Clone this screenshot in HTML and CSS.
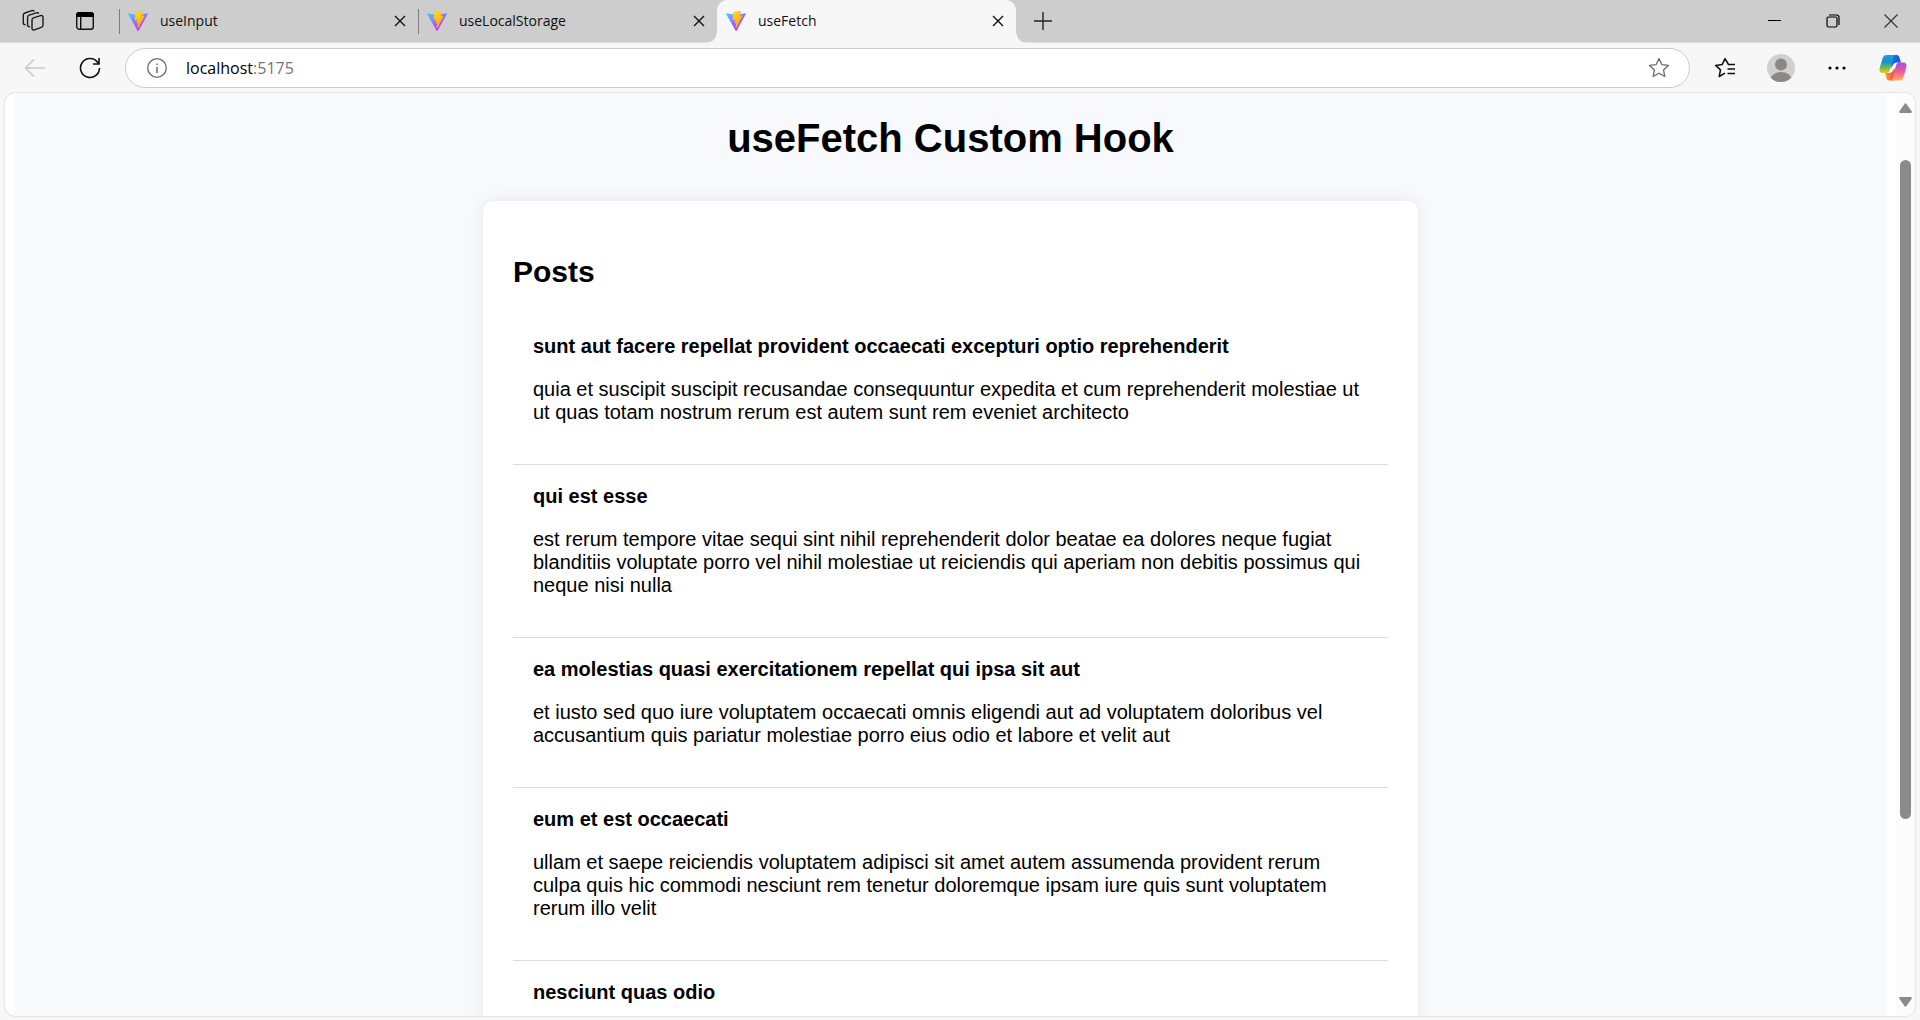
FILE: index.html
```html
<!DOCTYPE html>
<html lang="en">
<head>
<meta charset="utf-8">
<title>useFetch</title>
<link rel="stylesheet" href="styles.css">
</head>
<body>
<svg class="defs" width="0" height="0" aria-hidden="true">
  <defs>
    <linearGradient id="vite-a" x1="0" y1="0" x2="0.6" y2="0.85">
      <stop offset="0" stop-color="#41d1ff"/><stop offset="1" stop-color="#bd34fe"/>
    </linearGradient>
    <linearGradient id="vite-b" x1="0.4" y1="0" x2="0.6" y2="0.9">
      <stop offset="0" stop-color="#ffd83a"/><stop offset="0.1" stop-color="#ffd220"/><stop offset="1" stop-color="#ffa800"/>
    </linearGradient>
    <symbol id="vite" viewBox="0 0 256 257">
      <path fill="url(#vite-a)" d="M255.153 37.938 134.897 252.976c-2.483 4.44-8.862 4.466-11.382.048L.875 37.958c-2.746-4.814 1.371-10.646 6.827-9.67l120.385 21.517a6.537 6.537 0 0 0 2.322-.004l117.867-21.483c5.438-.991 9.574 4.796 6.877 9.62Z"/>
      <path fill="url(#vite-b)" stroke="#ffc21c" stroke-width="8" d="M185.432.063 96.44 17.501a3.268 3.268 0 0 0-2.634 3.014l-5.474 92.456a3.268 3.268 0 0 0 3.997 3.378l24.777-5.718c2.318-.535 4.413 1.507 3.936 3.838l-7.361 36.047c-.495 2.426 1.782 4.5 4.151 3.78l15.304-4.649c2.372-.72 4.652 1.36 4.15 3.788l-11.698 56.621c-.732 3.542 3.979 5.473 5.943 2.437l1.313-2.028 72.516-144.72c1.215-2.423-.88-5.186-3.54-4.672l-25.505 4.922c-2.396.462-4.435-1.77-3.759-4.114l16.646-57.705c.677-2.35-1.37-4.583-3.769-4.113Z"/>
    </symbol>
    <symbol id="cross" viewBox="0 0 12 12"><path d="M1 1 11 11M11 1 1 11" fill="none" stroke="#111" stroke-width="1.4"/></symbol>
  </defs>
</svg>
<div class="browser">
  <header class="tab-strip">
    <div class="strip-tools">
      <button class="icon-button" aria-label="Workspaces">
        <svg width="24" height="24" viewBox="0 0 24 24" fill="none" stroke="#1b1b1b" stroke-width="1.4">
          <path d="M12.500 8.800 19.500 6.700Q22 6 22 8.500V16q0 1.700-1.700 2.300l-6.900 2.500Q11 21.600 11 19v-8q0-1.700 1.500-2.200Z"/>
          <path d="M9 17.500Q6.600 18.200 6.600 16V8.400q0-1.600 1.600-2.200l7-2.400q1.900-.600 2.400 1"/>
          <path d="M4.600 15.500Q2.300 16 2.300 13.900V6.200q0-1.600 1.600-2.200L10.800 1.600q1.900-.600 2.400 1"/>
        </svg>
      </button>
      <button class="icon-button" aria-label="Tab actions">
        <svg width="20" height="20" viewBox="0 0 20 20" fill="none">
          <rect x="1.700" y="1.700" width="16.600" height="16.600" rx="2.800" stroke="#111" stroke-width="1.400"/>
          <path d="M1 6V4a3 3 0 0 1 3-3h12a3 3 0 0 1 3 3v2Z" fill="#000"/><path d="M5.700 6v12" stroke="#111" stroke-width="1.400"/>
        </svg>
      </button>
    </div>
    <nav class="tabs" aria-label="Tabs">
      <div class="tab"><svg class="favicon"><use href="#vite"/></svg><a class="tab-title" href="#">useInput</a><button class="tab-close" aria-label="Close useInput"><svg width="12" height="12"><use href="#cross"/></svg></button></div>
      <div class="tab"><svg class="favicon"><use href="#vite"/></svg><a class="tab-title" href="#">useLocalStorage</a><button class="tab-close" aria-label="Close useLocalStorage"><svg width="12" height="12"><use href="#cross"/></svg></button></div>
      <div class="tab tab-active"><svg class="favicon"><use href="#vite"/></svg><a class="tab-title" href="#" aria-current="page">useFetch</a><button class="tab-close" aria-label="Close useFetch"><svg width="12" height="12"><use href="#cross"/></svg></button></div>
    </nav>
    <button class="new-tab" aria-label="New tab"><svg width="18" height="18" viewBox="0 0 18 18"><path d="M9 0v18M0 9h18" stroke="#222" stroke-width="1.400"/></svg></button>
    <div class="window-controls">
      <button class="window-button" aria-label="Minimize"><svg width="14" height="14" viewBox="0 0 14 14"><path d="M0 6.500h13" stroke="#000"/></svg></button>
      <button class="window-button" aria-label="Restore"><svg width="14" height="14" viewBox="0 0 14 14" fill="none" stroke="#000" stroke-width="1.200"><rect x="1" y="3" width="10" height="10" rx="1.500"/><path d="M3 1h7.500Q13 1 13 3.500V11"/></svg></button>
      <button class="window-button" aria-label="Close window"><svg width="14" height="14" viewBox="0 0 14 14"><path d="M.5.500l13 13M13.500.500l-13 13" stroke="#333" stroke-width="1.200"/></svg></button>
    </div>
  </header>

  <div class="toolbar">
    <button class="icon-button" aria-label="Back" disabled><svg width="22" height="20" viewBox="0 0 22 20" fill="none" stroke="#c8c8c8" stroke-width="1.400"><path d="M21 10H1.500M10 1.500 1.500 10l8.500 8.500"/></svg></button>
    <button class="icon-button reload" aria-label="Refresh"><svg width="22" height="22" viewBox="0 0 22 22" fill="none" stroke="#111" stroke-width="1.600"><path d="M20.500 11A9.500 9.500 0 1 1 18.600 5.300L20 7"/><path d="M20 1v6h-6"/></svg></button>
    <div class="address-bar">
      <button class="icon-button" aria-label="Site information"><svg width="20" height="20" viewBox="0 0 20 20" fill="none" stroke="#6a6a6a"><circle cx="10" cy="10" r="9.300" stroke-width="1.300"/><path d="M10 9v6M10 5.500v1.600" stroke-width="1.500"/></svg></button>
      <label class="address"><input class="address-input" type="text" value="localhost" aria-label="Address"><span class="port">:5175</span></label>
      <button class="icon-button" aria-label="Add to favorites"><svg width="22" height="22" viewBox="0 0 22 22" fill="none" stroke="#6a6a6a" stroke-width="1.300" stroke-linejoin="round"><path d="m11 1.600 2.800 6 6.600.800-4.900 4.500 1.300 6.600-5.800-3.300-5.800 3.300 1.300-6.600L1.600 8.400l6.600-.800Z"/></svg></button>
    </div>
    <div class="toolbar-actions">
      <button class="icon-button" aria-label="Favorites"><svg width="22" height="22" viewBox="0 0 22 22" fill="none" stroke="#111" stroke-width="1.500" stroke-linejoin="round"><path d="M21 7.500h-6.500L11 1.600 8.200 7.600l-6.600.800 4.900 4.500-1.300 6.600 5.800-3.300M13.500 12H21M13.500 16.500H21"/></svg></button>
      <button class="icon-button" aria-label="Profile"><svg width="28" height="28" viewBox="0 0 28 28"><clipPath id="avatar"><circle cx="14" cy="14" r="14"/></clipPath><g clip-path="url(#avatar)"><path d="M0 0h28v28H0Z" fill="#d2d0ce"/><circle cx="14" cy="10.500" r="6" fill="#8a8886"/><ellipse cx="14" cy="25.500" rx="10.500" ry="7.500" fill="#8a8886"/></g></svg></button>
      <button class="icon-button" aria-label="Settings and more"><svg width="18" height="6" viewBox="0 0 18 6"><circle cx="2" cy="3" r="1.600"/><circle cx="9" cy="3" r="1.600"/><circle cx="16" cy="3" r="1.600"/></svg></button>
      <button class="icon-button" aria-label="Copilot">
        <svg width="28" height="28" viewBox="0 0 28 28">
          <defs>
            <linearGradient id="cp-left" x1="0" y1="0" x2="0" y2="1"><stop offset="0" stop-color="#12a3e6"/><stop offset=".4" stop-color="#1b90d0"/><stop offset=".7" stop-color="#6abd52"/><stop offset="1" stop-color="#f0cc10"/></linearGradient>
            <linearGradient id="cp-top" x1="0" y1="0" x2="1" y2=".5"><stop offset="0" stop-color="#2277ed"/><stop offset="1" stop-color="#174ed8"/></linearGradient>
            <linearGradient id="cp-right" x1="0" y1="0" x2="0" y2="1"><stop offset="0" stop-color="#a64bef"/><stop offset=".5" stop-color="#ee5899"/><stop offset="1" stop-color="#ffb05c"/></linearGradient>
            <linearGradient id="cp-bottom" x1="0" y1="0" x2="1" y2="0"><stop offset="0" stop-color="#ff9e3b"/><stop offset="1" stop-color="#ee4638"/></linearGradient>
          </defs>
          <path fill="url(#cp-top)" d="M13 1h4.500C20 1 20.300 3 21 5.500L22 8.500H18C16 8.500 14.500 9.500 14 11L12 14Z"/>
          <path fill="url(#cp-bottom)" d="M15 26.500H10.500C8 26.500 7.700 25 7 22L6 19H10C12 19 13.500 18 14 16.500L16 14Z"/>
          <path fill="url(#cp-left)" d="M8 1H17C15 1 14.500 3 13.800 5.500L11.500 14C10.800 17 10 19 7 19H3.500C1 19 0 17 .7 14L3.500 4.500C4.200 2 5.500 1 8 1Z"/>
          <path fill="url(#cp-right)" d="M20 26.500H11C13 26.500 13.500 25 14.200 22.500L16.500 13.500C17.300 10 18 8.500 21 8.500H24.500C27 8.500 28 10.500 27.300 13.500L24.500 23C23.800 25.500 22.500 26.500 20 26.500Z"/>
        </svg>
      </button>
    </div>
  </div>

  <div class="viewport">
    <main class="page">
      <h1 class="page-title">useFetch Custom Hook</h1>
      <section class="card">
        <h2 class="card-title">Posts</h2>
        <article class="post">
          <h3 class="post-title">sunt aut facere repellat provident occaecati excepturi optio reprehenderit</h3>
          <p class="post-body">quia et suscipit suscipit recusandae consequuntur expedita et cum reprehenderit molestiae ut ut quas totam nostrum rerum est autem sunt rem eveniet architecto</p>
        </article>
        <article class="post">
          <h3 class="post-title">qui est esse</h3>
          <p class="post-body">est rerum tempore vitae sequi sint nihil reprehenderit dolor beatae ea dolores neque fugiat blanditiis voluptate porro vel nihil molestiae ut reiciendis qui aperiam non debitis possimus qui neque nisi nulla</p>
        </article>
        <article class="post">
          <h3 class="post-title">ea molestias quasi exercitationem repellat qui ipsa sit aut</h3>
          <p class="post-body">et iusto sed quo iure voluptatem occaecati omnis eligendi aut ad voluptatem doloribus vel accusantium quis pariatur molestiae porro eius odio et labore et velit aut</p>
        </article>
        <article class="post">
          <h3 class="post-title">eum et est occaecati</h3>
          <p class="post-body">ullam et saepe reiciendis voluptatem adipisci sit amet autem assumenda provident rerum culpa quis hic commodi nesciunt rem tenetur doloremque ipsam iure quis sunt voluptatem rerum illo velit</p>
        </article>
        <article class="post">
          <h3 class="post-title">nesciunt quas odio</h3>
        </article>
      </section>
    </main>
    <div class="scrollbar">
      <svg width="13" height="10" viewBox="0 0 13 10"><path d="M5.500 1Q6.500-.500 7.500 1L12.500 8Q13.500 10 11.500 10H1.500Q-.500 10 .500 8Z" fill="#8b8b8b"/></svg>
      <div class="scroll-track"><div class="scroll-thumb"></div></div>
      <svg width="13" height="10" viewBox="0 0 13 10"><path d="M5.500 9Q6.500 10.500 7.500 9L12.500 2Q13.500 0 11.500 0H1.500Q-.500 0 .500 2Z" fill="#8b8b8b"/></svg>
    </div>
  </div>
</div>
</body>
</html>
```
FILE: styles.css
```css
* { box-sizing: border-box; }

body {
  margin: 0;
  font-family: "Liberation Sans", Arial, sans-serif;
  color: #000;
}

button {
  padding: 0;
  border: 0;
  background: none;
  display: flex;
  align-items: center;
  justify-content: center;
}

svg { display: block; flex: none; }

.defs { position: absolute; }

.browser {
  height: 100vh;
  display: flex;
  flex-direction: column;
  background: #f7f7f7;
  overflow: hidden;
}

/* Tab strip */
.tab-strip {
  flex: none;
  height: 43px;
  display: flex;
  background: #cdcdcd;
  border-bottom: 1px solid #dfdfdf;
  font-family: "Open Sans", "Noto Sans", sans-serif;
}

.strip-tools {
  width: 119px;
  display: flex;
  align-items: center;
  gap: 20px;
  padding-left: 17px;
}

.icon-button {
  flex: none;
  width: 32px;
  height: 32px;
}

.tabs { display: flex; }

.tab {
  width: 299px;
  height: 42px;
  display: flex;
  align-items: center;
  padding: 0 12px 0 9px;
  background: linear-gradient(#7d7d7d, #7d7d7d) 0 9px / 1px 25px no-repeat;
}

.favicon { width: 20px; height: 20px; }

.tab-title {
  flex: 1;
  margin-left: 12px;
  font-size: 14px;
  line-height: 20px;
  color: #111;
  text-decoration: none;
}

.tab-close { width: 12px; height: 20px; }

.tab-active {
  position: relative;
  height: 43px;
  padding-bottom: 1px;
  background: #f7f7f7;
  border-radius: 10px 10px 0 0;
}

.tab-active::before,
.tab-active::after {
  content: "";
  position: absolute;
  bottom: 0;
  width: 10px;
  height: 10px;
}

.tab-active::before {
  right: 100%;
  background: radial-gradient(circle at 0 0, transparent 9px, #f7f7f7 10px);
}

.tab-active::after {
  left: 100%;
  background: radial-gradient(circle at 100% 0, transparent 9px, #f7f7f7 10px);
}

.new-tab { width: 54px; }

.window-controls {
  display: flex;
  margin-left: auto;
}

.window-button { width: 58px; }

/* Toolbar */
.toolbar {
  flex: none;
  height: 50px;
  display: flex;
  align-items: center;
  padding: 0 11px 0 19px;
}

.reload { margin: 0 19px 0 23px; }

.address-bar {
  flex: 1;
  height: 40px;
  display: flex;
  align-items: center;
  padding: 0 14px 0 15px;
  background: #fff;
  border: 1px solid #cbcbcb;
  border-radius: 20px;
}

.address {
  flex: 1;
  display: flex;
  margin-left: 13px;
  font-family: "Open Sans", "Noto Sans", sans-serif;
  font-size: 16px;
  line-height: 24px;
}

.address-input {
  field-sizing: content;
  padding: 0;
  border: 0;
  outline: 0;
  background: none;
  font: inherit;
  color: #000;
}

.port { color: #767676; }

.toolbar-actions {
  display: flex;
  gap: 24px;
  padding-left: 19px;
}

/* Page area */
.viewport {
  flex: 1;
  min-height: 0;
  display: flex;
  margin: 0 5px 4px;
  padding-left: 10px;
  background: #fff;
  border-radius: 10px;
  box-shadow: 0 0 2px #bbb;
  overflow: hidden;
}

.page {
  flex: 1;
  margin-right: 10px;
  padding-top: 23px;
  background: #f8f9fd;
}

.page-title {
  margin: 0 0 40px;
  font-size: 40px;
  line-height: 45px;
  text-align: center;
}

.card {
  max-width: 935px;
  margin: 0 auto;
  padding: 30px;
  background: #fff;
  border-radius: 10px;
  box-shadow: 0 0 16px rgba(0, 0, 0, 0.08);
}

.card-title {
  margin: 24px 0 26px;
  font-size: 30px;
  line-height: 34px;
}

.post {
  padding: 20px;
  border-bottom: 1px solid #ddd;
}

.post:last-child { border-bottom: 0; }

.post-title {
  margin: 0;
  font-size: 20px;
  line-height: 23px;
}

.post-body {
  margin: 20px 0;
  font-size: 20px;
  line-height: 23px;
}

.scrollbar {
  width: 19px;
  display: flex;
  flex-direction: column;
  align-items: center;
  padding: 10px 0 9px;
  background: #fcfcfc;
}

.scroll-track {
  flex: 1;
  padding: 47px 0 178px;
  display: flex;
}

.scroll-thumb {
  width: 11px;
  border-radius: 6px;
  background: #8b8b8b;
}
```
